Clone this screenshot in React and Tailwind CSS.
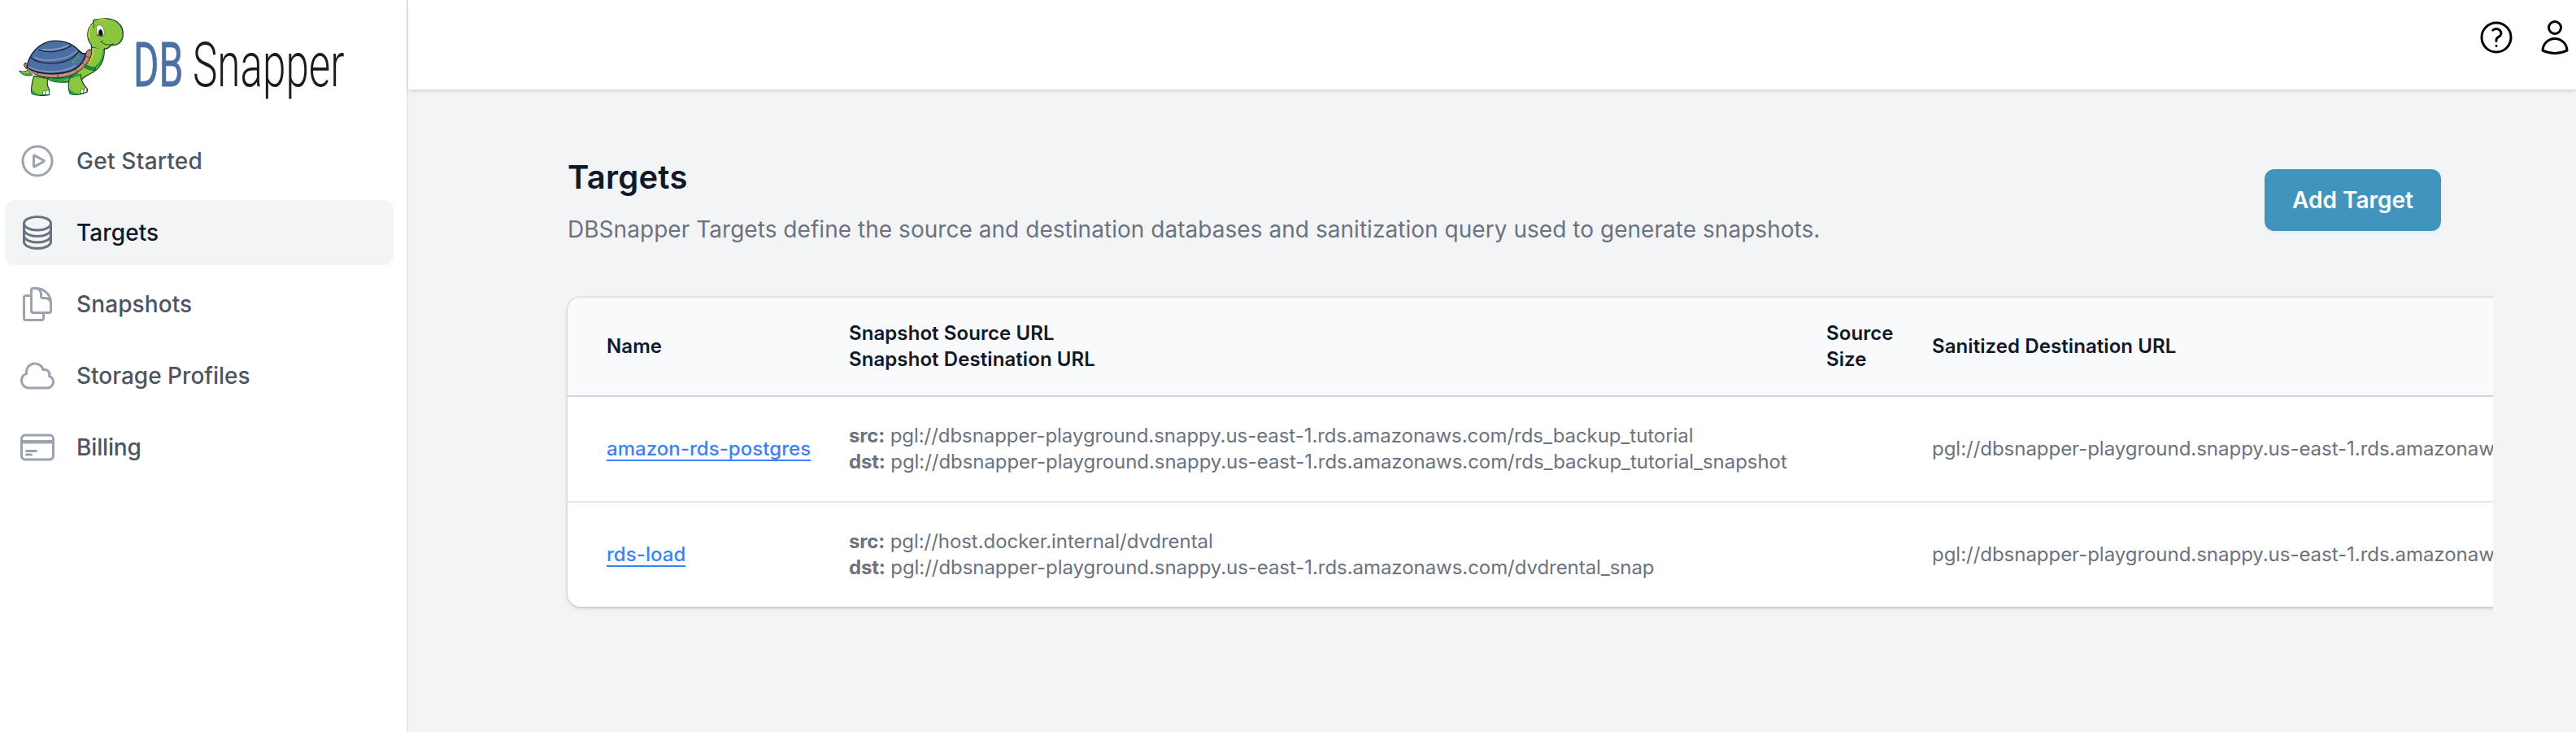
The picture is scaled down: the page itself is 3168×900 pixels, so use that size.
import {
  HiOutlinePlayCircle,
  HiOutlineCircleStack,
  HiOutlineDocumentDuplicate,
  HiOutlineCloud,
  HiOutlineCreditCard,
  HiOutlineQuestionMarkCircle,
  HiOutlineUser,
} from "react-icons/hi2";

const navItems = [
  { label: "Get Started", Icon: HiOutlinePlayCircle, spacing: "tracking-[0.25px]" },
  { label: "Targets", Icon: HiOutlineCircleStack, spacing: "tracking-[0.1px]", active: true },
  { label: "Snapshots", Icon: HiOutlineDocumentDuplicate, spacing: "tracking-[0.1px]" },
  { label: "Storage Profiles", Icon: HiOutlineCloud, spacing: "tracking-normal" },
  { label: "Billing", Icon: HiOutlineCreditCard, spacing: "tracking-[-0.15px]" },
];

const rows = [
  {
    name: "amazon-rds-postgres",
    src: "pgl://dbsnapper-playground.snappy.us-east-1.rds.amazonaws.com/rds_backup_tutorial",
    dst: "pgl://dbsnapper-playground.snappy.us-east-1.rds.amazonaws.com/rds_backup_tutorial_snapshot",
    sanitized: "pgl://dbsnapper-playground.snappy.us-east-1.rds.amazonaws.com/rds_backup_sanitized",
  },
  {
    name: "rds-load",
    src: "pgl://host.docker.internal/dvdrental",
    dst: "pgl://dbsnapper-playground.snappy.us-east-1.rds.amazonaws.com/dvdrental_snap",
    sanitized: "pgl://dbsnapper-playground.snappy.us-east-1.rds.amazonaws.com/dvdrental_sanitized",
  },
];

function Turtle() {
  return (
    <g strokeLinejoin="round" strokeLinecap="round">
      {/* tail */}
      <path d="M56 229C46 236 36 235 26 232C31 241 42 248 62 249L74 247Z" fill="#8cc63f" stroke="#14432d" strokeWidth="3" />
      <path d="M36 242C46 247 58 247 70 246L64 241Z" fill="#22a046" />
      {/* neck, chest and belly */}
      <path d="M292 143C296 160 284 176 272 196L236 240L130 258C140 274 180 276 212 271L254 268C256 262 270 250 288 242C322 226 342 200 340 150Z" fill="#8cc63f" stroke="#14432d" strokeWidth="3.5" />
      <path d="M134 260C150 272 190 274 210 270L252 244L240 240Z" fill="#22a046" />
      <path d="M160 266C180 269 200 266 212 258L250 240L258 252L248 262L212 268Z" fill="#8cc63f" />
      <path d="M339 152C341 186 328 210 306 222L300 218C322 204 334 184 334 152Z" fill="#22a046" />
      <path d="M296 150C300 166 290 184 278 200L284 206C300 188 304 168 302 148Z" fill="#b4d334" />
      {/* collar */}
      <path d="M266 204C278 214 292 220 308 220L306 229C288 230 270 222 260 212Z" fill="#159a48" stroke="#14432d" strokeWidth="2.5" />
      {/* legs */}
      <path d="M80 250C73 274 68 298 72 314C84 322 112 324 136 320L137 300C128 286 128 272 132 260Z" fill="#8cc63f" stroke="#14432d" strokeWidth="3.5" />
      <path d="M73 300C72 306 72 312 74 314C84 321 100 322 112 321C98 318 82 314 73 300Z" fill="#22a046" />
      <path d="M212 256C206 276 206 296 212 314C226 323 254 320 276 310L278 298C262 284 254 268 252 244Z" fill="#8cc63f" stroke="#14432d" strokeWidth="3.5" />
      <path d="M211 296C211 306 212 312 214 314C224 321 240 320 252 317C236 316 220 310 211 296Z" fill="#22a046" />
      <path d="M214 258L230 248L250 242L252 250C238 252 226 256 214 262Z" fill="#22a046" />
      {/* toes */}
      <g fill="#fff" stroke="#14432d" strokeWidth="2.2">
        <path d="M112 319C112 308 116 303 121 304C126 306 124 314 122 319Z" />
        <path d="M122 319C123 308 127 303 131 302L136 304L136 318Z" />
        <path d="M252 314C252 302 256 297 260 298C266 300 265 308 263 313Z" />
        <path d="M263 313C264 302 267 295 271 292L276 298L274 309Z" />
      </g>
      {/* shell rim */}
      <path d="M51 222C42 214 42 203 48 202C54 202 58 208 56 216L64 226C96 244 160 250 212 234C246 222 262 204 270 180C270 160 280 150 290 153C296 160 292 182 276 204C256 232 226 248 190 256C140 262 84 254 51 222Z" fill="#b5826f" stroke="#2a2322" strokeWidth="3" />
      <path d="M58 228C90 250 160 256 210 241C246 228 268 206 277 176" fill="none" stroke="#c99b88" strokeWidth="4" />
      <path d="M94 237L90 254M168 242L169 258M232 223L241 234M257 200L268 210M270 176L286 184" fill="none" stroke="#2a2322" strokeWidth="2" />
      {/* shell */}
      <path d="M54 218C60 176 90 138 130 125C180 112 222 130 246 156C254 164 262 170 271 168C266 196 244 224 208 234C156 248 88 242 54 218Z" fill="#4c6ea3" stroke="#17202d" strokeWidth="4" />
      <path d="M110 152C134 156 168 154 206 139" fill="none" stroke="#86a0ca" strokeWidth="5" />
      <path d="M84 182C112 198 204 196 238 158" fill="none" stroke="#7692c2" strokeWidth="6" />
      <path d="M62 218C110 242 190 240 232 212" fill="none" stroke="#7692c2" strokeWidth="6" />
      <path d="M98 154C124 166 180 164 218 139" fill="none" stroke="#17202d" strokeWidth="3.5" />
      <path d="M70 183C100 212 204 216 245 160" fill="none" stroke="#17202d" strokeWidth="3.5" />
      <path d="M246 158C254 166 262 170 270 168" fill="none" stroke="#17202d" strokeWidth="4" />
      <g fill="#3ec13e">
        <circle cx="226" cy="198" r="3.6" />
        <circle cx="235" cy="188" r="3.6" />
        <circle cx="244" cy="178" r="3.6" />
        <circle cx="239" cy="197" r="2.6" />
        <circle cx="249" cy="187" r="2.6" />
      </g>
      {/* head */}
      <path d="M299 54C297 44 302 41 312 43C330 34 366 34 390 53C410 68 412 90 406 110C400 128 386 138 364 136C356 146 342 154 326 150C312 148 298 142 292 134C272 110 274 76 299 54Z" fill="#8cc63f" />
      <path d="M340 150C354 150 360 144 364 137C386 138 402 128 408 108C412 84 406 66 388 52C366 36 332 36 312 43C302 41 297 44 299 54C274 76 272 110 292 136L294 146" fill="none" stroke="#14432d" strokeWidth="4" />
      <path d="M300 57C284 70 278 92 284 112" fill="none" stroke="#dfe02e" strokeWidth="4" />
      <path d="M316 46C326 41 336 40 346 42" fill="none" stroke="#e6e32e" strokeWidth="3.5" />
      <path d="M299 54C301 62 302 68 301 74" fill="none" stroke="#14432d" strokeWidth="3" />
      <path d="M314 64C326 58 336 68 339 84C341 96 338 103 334 103L316 100C310 86 309 72 314 64Z" fill="#fff" stroke="#27552b" strokeWidth="1.5" />
      <path d="M325 78C332 78 336 90 334 102L320 100C317 90 319 80 325 78Z" fill="#101010" />
      <path d="M313 99C320 102 327 103 334 103" fill="none" stroke="#14432d" strokeWidth="3" />
      <path d="M329 123C338 136 356 138 374 132M327 125L333 121" fill="none" stroke="#14432d" strokeWidth="3" />
    </g>
  );
}

function Logo() {
  return (
    <svg className="block h-[140px] w-[440px]" viewBox="0 0 440 140" role="img" aria-label="DB Snapper">
      <g transform="translate(15 10) scale(0.33333)">
        <Turtle />
      </g>
      <text
        transform="translate(164 106) scale(0.6 1)"
        className="fill-[#4c6fa5] font-['Roboto',sans-serif] text-[76px] font-normal"
        stroke="#4c6fa5"
        strokeWidth="0.8"
        textLength="102"
        lengthAdjust="spacingAndGlyphs"
      >
        DB
      </text>
      <text
        transform="translate(237 106) scale(0.6 1)"
        className="fill-[#1b1b1b] font-['Roboto',sans-serif] text-[76px] font-light"
        textLength="311"
        lengthAdjust="spacingAndGlyphs"
      >
        Snapper
      </text>
    </svg>
  );
}

function Sidebar() {
  return (
    <aside className="flex w-[502px] shrink-0 flex-col border-r-2 border-[#e5e7eb] bg-white">
      <Logo />
      <nav className="mt-[18px] flex flex-col gap-2 pr-4 pl-1.5 text-[28px] font-medium">
        {navItems.map(({ label, Icon, active, spacing }) => (
          <a
            key={label}
            className={
              active
                ? "flex h-20 items-center gap-6 rounded-xl bg-[#f3f4f6] px-4 text-[#111827]"
                : "flex h-20 items-center gap-6 rounded-xl px-4 text-[#4b5563]"
            }
          >
            <Icon className={active ? "size-12 text-[#6b7280]" : "size-12 text-[#9ca3af]"} />
            <span className={spacing}>{label}</span>
          </a>
        ))}
      </nav>
    </aside>
  );
}

function TargetsTable() {
  return (
    <div className="-mt-2 -ml-2 w-[2376px] overflow-hidden pt-2 pb-4 pl-2">
      <div className="w-[2900px] overflow-hidden rounded-2xl bg-white shadow-[0_0_0_2px_rgba(0,0,0,0.05),0_2px_6px_rgba(0,0,0,0.1),0_2px_4px_-2px_rgba(0,0,0,0.1)]">
        <table className="w-full table-fixed border-separate border-spacing-0 text-left text-2xl leading-8">
          <colgroup>
            <col className="w-[322px]" />
            <col className="w-[1202px]" />
            <col className="w-[130px]" />
            <col />
          </colgroup>
          <thead className="bg-[#f9fafb] text-[#111827]">
            <tr className="h-[122px] tracking-[0.08px] *:border-b-2 *:border-[#d1d5db]">
              <th className="pl-12 font-semibold">Name</th>
              <th className="pl-6 font-semibold">
                Snapshot Source URL
                <br />
                Snapshot Destination URL
              </th>
              <th className="pl-6 font-semibold">
                Source
                <br />
                Size
              </th>
              <th className="pl-6 font-semibold">Sanitized Destination URL</th>
            </tr>
          </thead>
          <tbody className="whitespace-nowrap text-[#6b7280]">
            {rows.map((row) => (
              <tr
                key={row.name}
                className="h-[130px] *:border-b-2 *:border-[#e5e7eb] last:h-[128px] last:*:border-b-0"
              >
                <td className="pl-12 font-medium tracking-[0.05px]">
                  <a className="text-[#3b82f6] underline underline-offset-[5px]">{row.name}</a>
                </td>
                <td className="pl-6 tracking-[-0.055px]">
                  <div>
                    <strong className="font-bold tracking-[-0.2px]">src:</strong> {row.src}
                  </div>
                  <div>
                    <strong className="font-bold tracking-[-0.2px]">dst:</strong> {row.dst}
                  </div>
                </td>
                <td />
                <td className="pl-6 tracking-[-0.03px]">{row.sanitized}</td>
              </tr>
            ))}
          </tbody>
        </table>
      </div>
    </div>
  );
}

export default function App() {
  return (
    <div className="flex h-[900px] w-[3168px] overflow-hidden bg-[#f3f4f6] font-['Inter',sans-serif] [font-optical-sizing:none]">
      <Sidebar />
      <div className="flex min-w-0 flex-1 flex-col">
        <header className="relative z-10 flex h-[110px] items-start justify-end gap-6 bg-white pt-[22px] pr-0.5 text-black shadow-[0_2px_6px_rgba(0,0,0,0.1),0_2px_4px_-2px_rgba(0,0,0,0.1)]">
          <HiOutlineQuestionMarkCircle className="size-12" />
          <HiOutlineUser className="size-12" />
        </header>
        <main className="pt-[82px] pl-[196px]">
          <div className="flex h-[174px] items-start justify-between pr-[166px]">
            <div>
              <h1 className="text-[40px] leading-[52px] font-semibold tracking-[0.25px] text-[#111827]">Targets</h1>
              <p className="mt-[18px] text-[28px] leading-10 tracking-[0.04px] text-[#6b7280]">
                DBSnapper Targets define the source and destination databases and sanitization query used to generate
                snapshots.
              </p>
            </div>
            <button className="mt-4 h-[76px] w-[217px] rounded-xl bg-[#4195bd] text-[28px] font-semibold text-white shadow-[0_2px_4px_rgba(0,0,0,0.05)]">
              Add Target
            </button>
          </div>
          <TargetsTable />
        </main>
      </div>
    </div>
  );
}
